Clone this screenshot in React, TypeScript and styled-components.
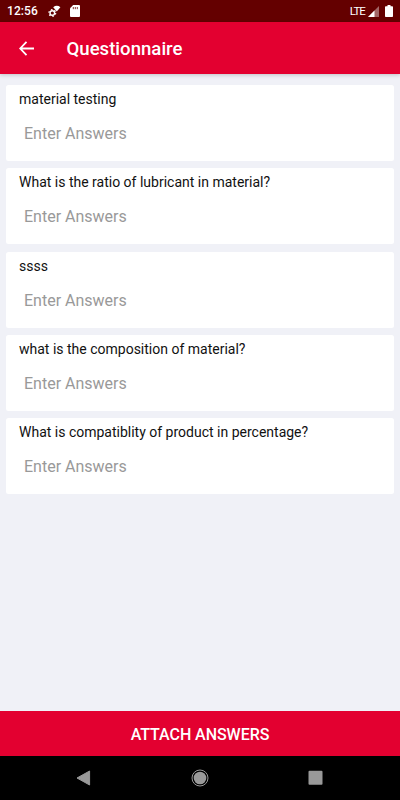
import React from "react";
import styled, { createGlobalStyle } from "styled-components";

const GlobalStyle = createGlobalStyle`
  * { box-sizing: border-box; }
  body { margin: 0; font-family: Roboto, "Noto Sans", sans-serif; }
`;

const Screen = styled.div`
  display: flex;
  flex-direction: column;
  width: 400px;
  height: 800px;
  overflow: hidden;
  background: #f0f1f7;
`;

const StatusBar = styled.div`
  display: flex;
  align-items: center;
  flex: 0 0 22px;
  padding: 0 7px;
  background: #640000;
  color: #fff;
`;

const Clock = styled.span`
  width: 41px;
  font-size: 12px;
  line-height: 22px;
  font-weight: 500;
  letter-spacing: 0.1px;
  white-space: nowrap;
`;

const StatusIcon = styled.svg<{ $gap?: number }>`
  display: block;
  flex: none;
  margin-left: ${(p) => p.$gap ?? 0}px;
`;

const Network = styled.span`
  margin-left: auto;
  padding-top: 1px;
  font-size: 11.5px;
  line-height: 21px;
  letter-spacing: -0.9px;
`;

const Header = styled.header`
  display: flex;
  align-items: center;
  flex: 0 0 52px;
  padding-left: 19px;
  background: #e30030;
  color: #fff;
  box-shadow: 0 1px 4px rgba(0, 0, 0, 0.2);
`;

const BackButton = styled.button`
  display: flex;
  width: 47.5px;
  padding: 0;
  border: 0;
  background: none;
  color: inherit;
`;

const Title = styled.h1`
  margin: 2px 0 0;
  font-size: 18.6px;
  line-height: 24px;
  font-weight: 500;
`;

const QuestionList = styled.main`
  display: flex;
  flex: 1;
  flex-direction: column;
  gap: 7.1px;
  padding: 11px 6px 0;
`;

const Card = styled.section`
  height: 76.2px;
  flex: none;
  padding: 5px 13px 0;
  border-radius: 2.5px;
  background: #fff;
`;

const Question = styled.label`
  display: block;
  font-size: 14px;
  line-height: 18px;
  color: #111;
`;

const Answer = styled.input`
  display: block;
  width: 100%;
  height: 24px;
  margin-top: 14px;
  padding: 0 5px;
  border: 0;
  outline: 0;
  background: none;
  font: 400 16px/24px Roboto, sans-serif;
  &::placeholder { color: #999; opacity: 1; }
`;

const AttachButton = styled.button`
  flex: 0 0 45px;
  padding: 2px 0 0;
  border: 0;
  background: #e30030;
  color: #fff;
  font: 500 16px/43px Roboto, sans-serif;
  letter-spacing: -0.05px;
`;

const NavBar = styled.nav`
  display: flex;
  align-items: center;
  justify-content: space-between;
  flex: 0 0 44px;
  padding: 0 76px;
  background: #000;
`;

const questions = [
  "material testing",
  "What is the ratio of lubricant in material?",
  "ssss",
  "what is the composition of material?",
  "What is compatiblity of product in percentage?",
];

export default function App() {
  return (
    <Screen>
      <GlobalStyle />
      <StatusBar>
        <Clock>12:56</Clock>
        <StatusIcon width="13" height="14" viewBox="0 0 13 14">
          <circle cx="4.3" cy="9" r="2.3" fill="none" stroke="#fff" strokeWidth="1.4" />
          <circle cx="4.3" cy="9" r="3.4" fill="none" stroke="#fff" strokeWidth="1.2" strokeDasharray="1.6 1.96" />
          <path d="M5.2 3.2Q8.8 .5 12.4 3.2L8.8 7.4Z" fill="#fff" />
        </StatusIcon>
        <StatusIcon $gap={9} width="10" height="12" viewBox="0 0 10 12">
          <path d="M3.2 0H9Q10 0 10 1V11Q10 12 9 12H1Q0 12 0 11V3.2Z" fill="#fff" />
          <path d="M3.3 2V4.2M5.3 2V4.2M7.3 2V4.2" stroke="#640000" strokeWidth=".8" />
        </StatusIcon>
        <Network>LTE</Network>
        <StatusIcon $gap={3} width="11" height="11" viewBox="0 0 11 11">
          <path d="M11 0V11H0Z" fill="#a26666" />
          <path d="M6.5 4.5V11H0Z" fill="#fff" />
        </StatusIcon>
        <StatusIcon $gap={6} width="8" height="12" viewBox="0 0 8 12">
          <path d="M2.5 0H5.5V1.2H7.2Q8 1.2 8 2V11.2Q8 12 7.2 12H.8Q0 12 0 11.2V2Q0 1.2 .8 1.2H2.5Z" fill="#fff" />
        </StatusIcon>
      </StatusBar>
      <Header>
        <BackButton aria-label="Back">
          <svg width="15" height="15" viewBox="0 0 15 15" fill="none" stroke="currentColor" strokeWidth="1.8">
            <path d="M7.5 .9L1.2 7.5L7.5 14.1M1.2 7.5H15" />
          </svg>
        </BackButton>
        <Title>Questionnaire</Title>
      </Header>
      <QuestionList>
        {questions.map((question, index) => (
          <Card key={question}>
            <Question htmlFor={`answer-${index}`}>{question}</Question>
            <Answer id={`answer-${index}`} placeholder="Enter Answers" />
          </Card>
        ))}
      </QuestionList>
      <AttachButton>ATTACH ANSWERS</AttachButton>
      <NavBar>
        <svg width="15" height="16" viewBox="0 0 15 16">
          <path d="M1 8L13.6 1V15Z" fill="#999" stroke="#999" strokeLinejoin="round" />
        </svg>
        <svg width="18" height="18" viewBox="0 0 18 18">
          <circle cx="9" cy="9" r="8" fill="none" stroke="#999" />
          <circle cx="9" cy="9" r="6.3" fill="#999" />
        </svg>
        <svg width="16" height="16" viewBox="0 0 16 16">
          <rect x=".5" y=".7" width="14" height="14" rx="1" fill="#999" />
        </svg>
      </NavBar>
    </Screen>
  );
}
